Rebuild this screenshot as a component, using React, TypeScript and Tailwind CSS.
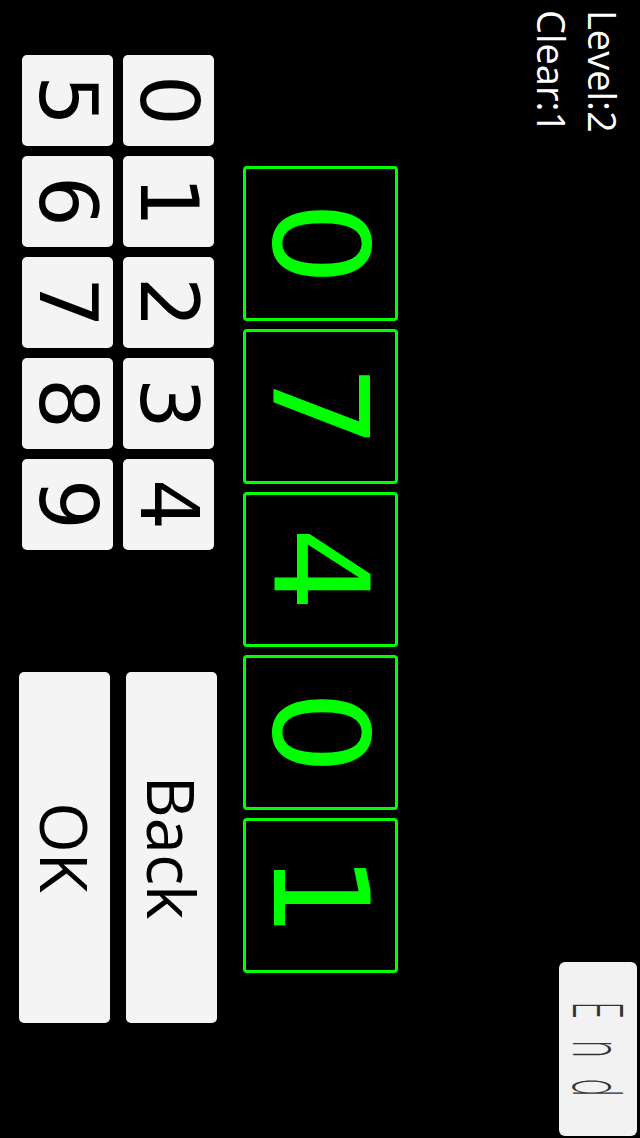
import React from 'react';

const code = ['0', '7', '4', '0', '1'];
const keys = ['0', '1', '2', '3', '4', '5', '6', '7', '8', '9'];

const App = () => {
    return (
        <div className="w-[640px] h-[1138px] bg-black overflow-hidden">
            {/* the game runs in landscape, so the whole screen is turned a quarter clockwise */}
            <div className="w-[1138px] h-[640px] bg-black flex flex-col origin-top-left translate-x-[640px] rotate-90">
                {/* status + end */}
                <div className="h-[242px] flex items-start justify-between">
                    <div className="pl-[10px] pt-[12px] text-white font-['Open_Sans',sans-serif] text-[38px] leading-[51px]">
                        <div>Level:2</div>
                        <div>Clear:1</div>
                    </div>
                    <button className="mt-[3px] mr-[2px] w-[174px] h-[78px] rounded-md bg-[#f2f2f2] flex items-center justify-center">
                        <span className="inline-block scale-y-[2.3] text-[#333] font-['Inter',sans-serif] font-extralight text-[30px] leading-[24px] tracking-[21px] pl-[21px]">
                            End
                        </span>
                    </button>
                </div>

                {/* entered digits */}
                <div className="flex gap-[8px] pl-[166px]">
                    {code.map((d, i) => (
                        <div
                            key={i}
                            className="w-[155px] h-[155px] border-[3px] border-[#00ff00] rounded-[4px] flex items-center justify-center text-[#00ff00] font-['DejaVu_Sans',sans-serif] text-[132px] leading-none"
                        >
                            {d}
                        </div>
                    ))}
                </div>

                {/* keypad + actions */}
                <div className="flex items-start mt-[26px]">
                    <div className="ml-[55px] mt-[3px] grid grid-cols-5 gap-[10px]">
                        {keys.map((k) => (
                            <button
                                key={k}
                                className="w-[91px] h-[91px] rounded-[5px] bg-[#f4f4f4] flex items-center justify-center text-black font-['DejaVu_Sans',sans-serif] text-[80px] leading-none"
                            >
                                {k}
                            </button>
                        ))}
                    </div>
                    <div className="ml-[122px] flex flex-col gap-[16px]">
                        <button className="w-[351px] h-[91px] rounded-[5px] bg-[#f4f4f4] flex items-center justify-center text-black font-['Open_Sans',sans-serif] text-[65px] leading-none">
                            Back
                        </button>
                        <button className="w-[351px] h-[91px] rounded-[5px] bg-[#f4f4f4] flex items-center justify-center text-black font-['Open_Sans',sans-serif] text-[65px] leading-none">
                            OK
                        </button>
                    </div>
                </div>
            </div>
        </div>
    );
};

export default App;
